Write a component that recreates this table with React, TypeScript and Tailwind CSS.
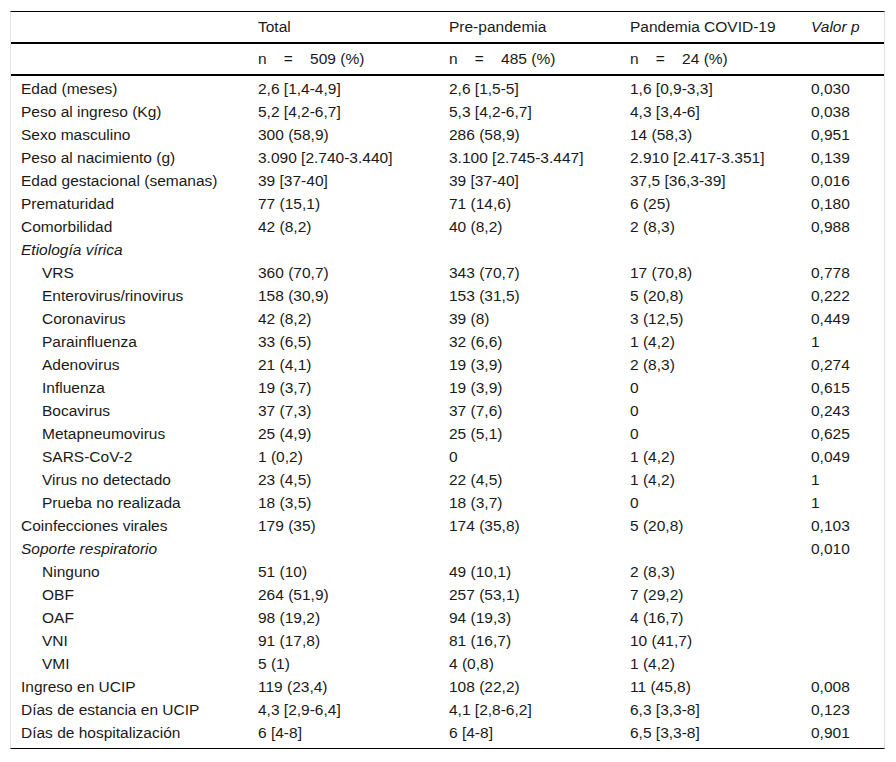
import React from 'react';

type Row = {
  label: string;
  total?: string;
  pre?: string;
  covid?: string;
  p?: string;
  indent?: boolean;
  italic?: boolean;
};

const rows: Row[] = [
  { label: 'Edad (meses)', total: '2,6 [1,4-4,9]', pre: '2,6 [1,5-5]', covid: '1,6 [0,9-3,3]', p: '0,030' },
  { label: 'Peso al ingreso (Kg)', total: '5,2 [4,2-6,7]', pre: '5,3 [4,2-6,7]', covid: '4,3 [3,4-6]', p: '0,038' },
  { label: 'Sexo masculino', total: '300 (58,9)', pre: '286 (58,9)', covid: '14 (58,3)', p: '0,951' },
  { label: 'Peso al nacimiento (g)', total: '3.090 [2.740-3.440]', pre: '3.100 [2.745-3.447]', covid: '2.910 [2.417-3.351]', p: '0,139' },
  { label: 'Edad gestacional (semanas)', total: '39 [37-40]', pre: '39 [37-40]', covid: '37,5 [36,3-39]', p: '0,016' },
  { label: 'Prematuridad', total: '77 (15,1)', pre: '71 (14,6)', covid: '6 (25)', p: '0,180' },
  { label: 'Comorbilidad', total: '42 (8,2)', pre: '40 (8,2)', covid: '2 (8,3)', p: '0,988' },
  { label: 'Etiología vírica', italic: true },
  { label: 'VRS', indent: true, total: '360 (70,7)', pre: '343 (70,7)', covid: '17 (70,8)', p: '0,778' },
  { label: 'Enterovirus/rinovirus', indent: true, total: '158 (30,9)', pre: '153 (31,5)', covid: '5 (20,8)', p: '0,222' },
  { label: 'Coronavirus', indent: true, total: '42 (8,2)', pre: '39 (8)', covid: '3 (12,5)', p: '0,449' },
  { label: 'Parainfluenza', indent: true, total: '33 (6,5)', pre: '32 (6,6)', covid: '1 (4,2)', p: '1' },
  { label: 'Adenovirus', indent: true, total: '21 (4,1)', pre: '19 (3,9)', covid: '2 (8,3)', p: '0,274' },
  { label: 'Influenza', indent: true, total: '19 (3,7)', pre: '19 (3,9)', covid: '0', p: '0,615' },
  { label: 'Bocavirus', indent: true, total: '37 (7,3)', pre: '37 (7,6)', covid: '0', p: '0,243' },
  { label: 'Metapneumovirus', indent: true, total: '25 (4,9)', pre: '25 (5,1)', covid: '0', p: '0,625' },
  { label: 'SARS-CoV-2', indent: true, total: '1 (0,2)', pre: '0', covid: '1 (4,2)', p: '0,049' },
  { label: 'Virus no detectado', indent: true, total: '23 (4,5)', pre: '22 (4,5)', covid: '1 (4,2)', p: '1' },
  { label: 'Prueba no realizada', indent: true, total: '18 (3,5)', pre: '18 (3,7)', covid: '0', p: '1' },
  { label: 'Coinfecciones virales', total: '179 (35)', pre: '174 (35,8)', covid: '5 (20,8)', p: '0,103' },
  { label: 'Soporte respiratorio', italic: true, p: '0,010' },
  { label: 'Ninguno', indent: true, total: '51 (10)', pre: '49 (10,1)', covid: '2 (8,3)' },
  { label: 'OBF', indent: true, total: '264 (51,9)', pre: '257 (53,1)', covid: '7 (29,2)' },
  { label: 'OAF', indent: true, total: '98 (19,2)', pre: '94 (19,3)', covid: '4 (16,7)' },
  { label: 'VNI', indent: true, total: '91 (17,8)', pre: '81 (16,7)', covid: '10 (41,7)' },
  { label: 'VMI', indent: true, total: '5 (1)', pre: '4 (0,8)', covid: '1 (4,2)' },
  { label: 'Ingreso en UCIP', total: '119 (23,4)', pre: '108 (22,2)', covid: '11 (45,8)', p: '0,008' },
  { label: 'Días de estancia en UCIP', total: '4,3 [2,9-6,4]', pre: '4,1 [2,8-6,2]', covid: '6,3 [3,3-8]', p: '0,123' },
  { label: 'Días de hospitalización', total: '6 [4-8]', pre: '6 [4-8]', covid: '6,5 [3,3-8]', p: '0,901' },
];

// fixed column template shared by header and body rows
const cols = 'grid grid-cols-[237px_191px_181px_181px_84px]';

export default function App() {
  return (
    <div className="min-h-[762px] bg-white pt-[11px] px-[10px] font-['Liberation_Sans',Arial,sans-serif] text-[15.5px] text-[#1a1a1a]">
      <div className="w-[875px] border-x border-[#e4e4e4] border-t border-t-black border-b border-b-black">
        <div className={`${cols} h-[32px] items-center border-b-2 border-black`}>
          <div />
          <div className="pl-[10px]">Total</div>
          <div className="pl-[10px]">Pre-pandemia</div>
          <div className="pl-[10px]">Pandemia COVID-19</div>
          <div className="pl-[10px] italic">Valor p</div>
        </div>
        <div className={`${cols} h-[32px] items-center border-b-2 border-black whitespace-pre`}>
          <div />
          <div className="pl-[10px]">{'n    =    509 (%)'}</div>
          <div className="pl-[10px]">{'n    =    485 (%)'}</div>
          <div className="pl-[10px]">{'n    =    24 (%)'}</div>
          <div />
        </div>
        <div className="pt-[1px] pb-[4px]">
          {rows.map((r) => (
            <div key={r.label} className={`${cols} h-[23px] items-center`}>
              <div className={`${r.indent ? 'pl-[31px]' : 'pl-[10px]'} ${r.italic ? 'italic' : ''}`}>
                {r.label}
              </div>
              <div className="pl-[10px]">{r.total}</div>
              <div className="pl-[10px]">{r.pre}</div>
              <div className="pl-[10px]">{r.covid}</div>
              <div className="pl-[10px]">{r.p}</div>
            </div>
          ))}
        </div>
      </div>
    </div>
  );
}
